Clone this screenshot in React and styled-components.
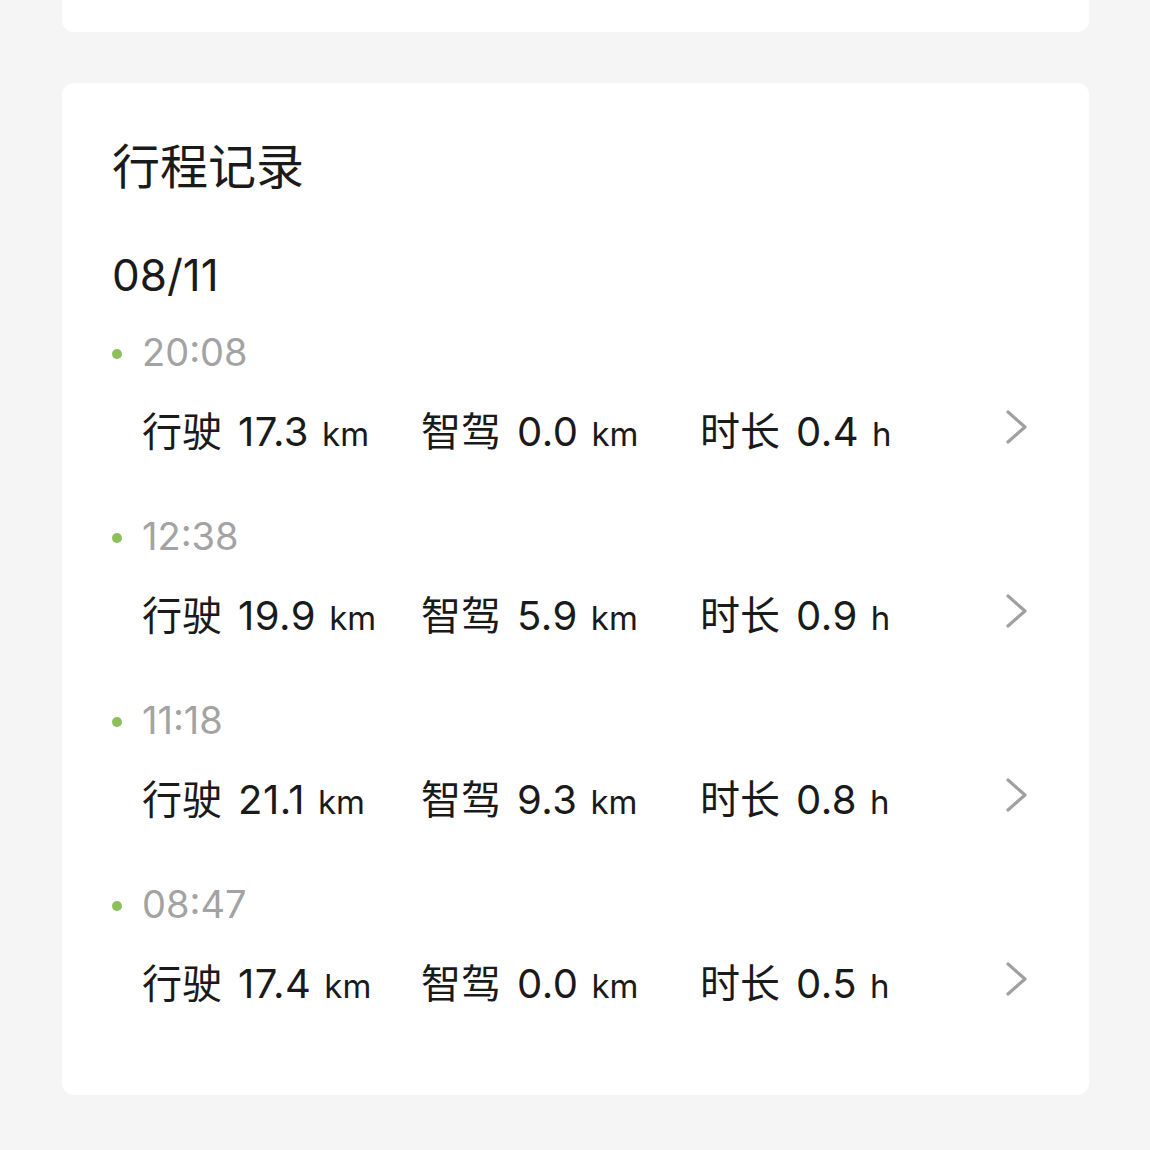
import React from "react";
import styled, { createGlobalStyle } from "styled-components";

const GlobalStyle = createGlobalStyle`
  body {
    margin: 0;
    background: #f5f5f5;
    font-family: Inter, "Noto Sans CJK SC", sans-serif;
  }
`;

const Page = styled.div`
  width: 1150px;
  height: 1150px;
  padding: 0 61px 0 62px;
  box-sizing: border-box;
  display: flex;
  flex-direction: column;
  gap: 51px;
`;

const TopCard = styled.div`
  height: 32px;
  background: #fff;
  border-radius: 0 0 12px 12px;
`;

const Card = styled.section`
  background: #fff;
  border-radius: 12px;
  padding: 50px 61px 86px 50px;
  display: flex;
  flex-direction: column;
`;

const Title = styled.h2`
  margin: 0;
  font-family: "Noto Sans CJK SC", sans-serif;
  font-size: 48px;
  line-height: 60px;
  font-weight: 400;
  color: #1a1a1a;
`;

const DateLabel = styled.div`
  margin-top: 54px;
  font-size: 44px;
  line-height: 56px;
  color: #1a1a1a;
`;

const TripList = styled.div`
  margin-top: 24px;
  display: flex;
  flex-direction: column;
  gap: 54px;
`;

const Trip = styled.div`
  display: flex;
  flex-direction: column;
  gap: 24px;
`;

const TimeRow = styled.div`
  display: flex;
  align-items: center;
  gap: 20px;
  font-size: 38px;
  line-height: 50px;
  color: #a3a3a3;
`;

const Dot = styled.span`
  width: 10px;
  height: 10px;
  border-radius: 50%;
  background: #8cbf5a;
  margin-top: 3px;
`;

const StatRow = styled.div`
  display: grid;
  grid-template-columns: 279px 279px 1fr auto;
  align-items: center;
  padding-left: 30px;
  height: 56px;
`;

const Stat = styled.div`
  display: flex;
  align-items: baseline;
  gap: 13px;
  color: #1a1a1a;
  font-size: 40px;
  line-height: 56px;
`;

const Label = styled.span`
  font-family: "Noto Sans CJK SC", sans-serif;
  margin-right: 3px;
`;

const Value = styled.span`
  letter-spacing: 0.5px;
`;

const Unit = styled.span`
  font-size: 33px;
`;

const Chevron = styled.svg`
  width: 24px;
  height: 34px;
  margin-top: -10px;
`;

const trips = [
  { time: "20:08", drive: "17.3", smart: "0.0", hours: "0.4" },
  { time: "12:38", drive: "19.9", smart: "5.9", hours: "0.9" },
  { time: "11:18", drive: "21.1", smart: "9.3", hours: "0.8" },
  { time: "08:47", drive: "17.4", smart: "0.0", hours: "0.5" },
];

const App = () => {
  return (
    <>
      <GlobalStyle />
      <Page>
        <TopCard />
        <Card>
          <Title>行程记录</Title>
          <DateLabel>08/11</DateLabel>
          <TripList>
            {trips.map((t) => (
              <Trip key={t.time}>
                <TimeRow>
                  <Dot />
                  {t.time}
                </TimeRow>
                <StatRow>
                  <Stat>
                    <Label>行驶</Label>
                    <Value>{t.drive}</Value>
                    <Unit>km</Unit>
                  </Stat>
                  <Stat>
                    <Label>智驾</Label>
                    <Value>{t.smart}</Value>
                    <Unit>km</Unit>
                  </Stat>
                  <Stat>
                    <Label>时长</Label>
                    <Value>{t.hours}</Value>
                    <Unit>h</Unit>
                  </Stat>
                  <Chevron viewBox="0 0 24 34">
                    <path d="M4 2 L21 17 L4 32" fill="none" stroke="#a0a0a0" strokeWidth="3.2" strokeLinecap="round" strokeLinejoin="round" />
                  </Chevron>
                </StatRow>
              </Trip>
            ))}
          </TripList>
        </Card>
      </Page>
    </>
  );
};

export default App;
